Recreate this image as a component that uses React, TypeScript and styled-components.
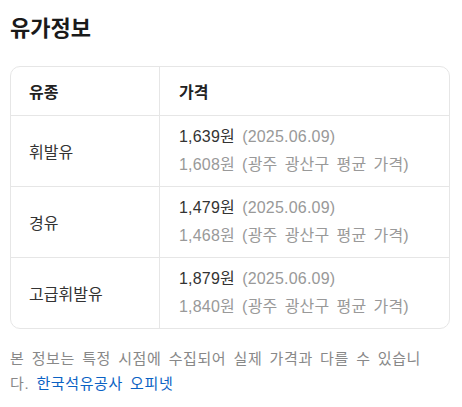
import React from "react";
import styled, { createGlobalStyle } from "styled-components";

const GlobalStyle = createGlobalStyle`
  body {
    margin: 0;
    background: #fff;
    font-family: "Liberation Sans", "Noto Sans CJK KR", Arial, sans-serif;
    color: #222;
  }
`;

const Page = styled.div`
  width: 440px;
  padding: 12px 12px 0 10px;
`;

const Title = styled.h2`
  margin: 0 0 20px 0;
  font-size: 22px;
  font-weight: 700;
  line-height: 34px;
  color: #1a1a1a;
`;

const Table = styled.div`
  border: 1px solid #e6e6e6;
  border-radius: 10px;
  overflow: hidden;
`;

const Row = styled.div<{ $head?: boolean }>`
  display: grid;
  grid-template-columns: 149px 1fr;
  min-height: ${(p) => (p.$head ? "48px" : "70px")};
  & + & {
    border-top: 1px solid #e6e6e6;
  }
`;

const Cell = styled.div<{ $head?: boolean; $first?: boolean }>`
  display: flex;
  flex-direction: column;
  justify-content: center;
  padding: 0 0 0 ${(p) => (p.$first ? "18px" : "19px")};
  border-right: ${(p) => (p.$first ? "1px solid #e6e6e6" : "none")};
  font-size: 16px;
  font-weight: ${(p) => (p.$head ? 700 : 400)};
  color: ${(p) => (p.$head ? "#222" : "#333")};
`;

const Line = styled.div<{ $muted?: boolean }>`
  line-height: 28px;
  word-spacing: 2.5px;
  letter-spacing: 0.2px;
  color: ${(p) => (p.$muted ? "#999" : "#333")};
`;

const Note = styled.span`
  color: #999;
`;

const Footer = styled.p`
  margin: 17px 0 0 0;
  padding-right: 12px;
  font-size: 15px;
  line-height: 25px;
  word-spacing: 2.5px;
  letter-spacing: 0.6px;
  color: #888;
`;

const Link = styled.a`
  color: #0b62c4;
  text-decoration: none;
`;

const rows = [
  { name: "휘발유", price: "1,639", avg: "1,608" },
  { name: "경유", price: "1,479", avg: "1,468" },
  { name: "고급휘발유", price: "1,879", avg: "1,840" },
];

export default function App() {
  return (
    <>
      <GlobalStyle />
      <Page>
        <Title>유가정보</Title>
        <Table>
          <Row $head>
            <Cell $head $first>유종</Cell>
            <Cell $head>가격</Cell>
          </Row>
          {rows.map((r) => (
            <Row key={r.name}>
              <Cell $first>{r.name}</Cell>
              <Cell>
                <Line>
                  {r.price}원 <Note>(2025.06.09)</Note>
                </Line>
                <Line $muted>{r.avg}원 (광주 광산구 평균 가격)</Line>
              </Cell>
            </Row>
          ))}
        </Table>
        <Footer>
          본 정보는 특정 시점에 수집되어 실제 가격과 다를 수 있습니다.{" "}
          <Link href="#">한국석유공사 오피넷</Link>
        </Footer>
      </Page>
    </>
  );
}
